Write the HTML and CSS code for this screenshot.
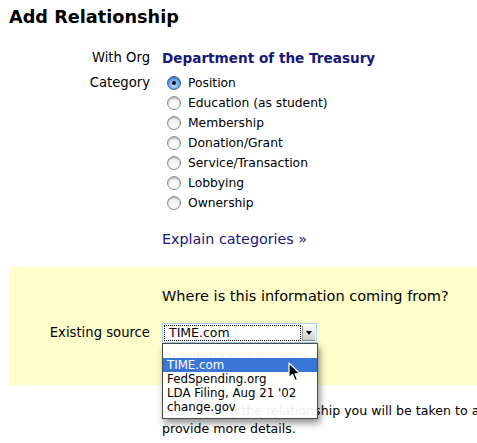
FILE: index.html
```html
<!DOCTYPE html>
<html>
<head>
<meta charset="utf-8">
<link rel="stylesheet" href="styles.css">
</head>
<body>
<h1 class="title">Add Relationship</h1>
<div class="form">
  <div class="row">
    <div class="label">With Org</div>
    <div class="org">Department of the Treasury</div>
  </div>
  <div class="row">
    <div class="label">Category</div>
    <div class="radios">
      <div class="opt"><span class="radio checked"></span>Position</div>
      <div class="opt"><span class="radio"></span>Education (as student)</div>
      <div class="opt"><span class="radio"></span>Membership</div>
      <div class="opt"><span class="radio"></span>Donation/Grant</div>
      <div class="opt"><span class="radio"></span>Service/Transaction</div>
      <div class="opt"><span class="radio"></span>Lobbying</div>
      <div class="opt"><span class="radio"></span>Ownership</div>
    </div>
  </div>
  <div class="row">
    <div class="label"></div>
    <a class="explain">Explain categories »</a>
  </div>
</div>
<div class="source">
  <div class="row">
    <div class="label"></div>
    <div class="question">Where is this information coming from?</div>
  </div>
  <div class="row srcrow">
    <div class="label">Existing source</div>
    <div class="selectwrap">
      <div class="select">
        <div class="selval">TIME.com</div>
        <div class="selbtn"><span class="tri"></span></div>
      </div>
      <div class="dropdown">
        <div class="item blank">&nbsp;</div>
        <div class="item hl">TIME.com</div>
        <div class="item">FedSpending.org</div>
        <div class="item">LDA Filing, Aug 21 '02</div>
        <div class="item">change.gov</div>
      </div>
      <svg class="cursor" width="14" height="22" viewBox="0 0 14 22"><path d="M1 1 L1 16 L4.5 12.5 L7 18.5 L9.5 17.5 L7 11.8 L12 11.8 Z" fill="#000" stroke="#fff" stroke-width="1.2" stroke-linejoin="round"/></svg>
    </div>
  </div>
  <div class="row">
    <div class="label"></div>
    <a class="newsrc">Or enter a new source »</a>
  </div>
</div>
<div class="row note">
  <div class="label"></div>
  <div class="notetext">After saving the relationship you will be taken to a<br>provide more details.</div>
</div>
</body>
</html>
```

FILE: styles.css
```css
html, body {
  overflow: hidden;
}
body {
  margin: 0;
  padding: 0 0 0 9px;
  font-family: "DejaVu Sans", "Verdana", sans-serif;
  color: #000;
  background: #fff;
  width: 468px;
}
.title {
  font-size: 17.7px;
  font-weight: bold;
  line-height: 22px;
  margin: 6px 0 0;
}
.form {
  margin-top: 20px;
}
.row {
  display: grid;
  grid-template-columns: 141px 1fr;
  column-gap: 12px;
  align-items: start;
}
.label {
  text-align: right;
  font-size: 13.2px;
  line-height: 20px;
  white-space: nowrap;
}
.org {
  font-size: 13.6px;
  font-weight: bold;
  color: #16167c;
  line-height: 20px;
  white-space: nowrap;
  margin-bottom: 5px;
}
.radios {
  display: flex;
  flex-direction: column;
}
.opt {
  display: flex;
  align-items: center;
  height: 20px;
  font-size: 12.3px;
  white-space: nowrap;
}
.radio {
  width: 12px;
  height: 12px;
  border-radius: 50%;
  border: 1px solid #8c8c8c;
  background: radial-gradient(circle at 50% 70%, #ffffff 0%, #f4f4f4 45%, #d2d2d2 100%);
  box-shadow: inset 0 1px 1px rgba(0,0,0,0.25);
  margin-left: 5px;
  margin-right: 7px;
  flex: none;
  position: relative;
}
.radio.checked {
  border-color: #3a5f9a;
  background: radial-gradient(circle at 50% 65%, #bfe0ff 0%, #7db5ef 40%, #3a7ad6 100%);
}
.radio.checked::after {
  content: "";
  position: absolute;
  left: 4px;
  top: 4px;
  width: 4px;
  height: 4px;
  border-radius: 50%;
  background: #111;
}
.explain {
  font-size: 14.3px;
  line-height: 20px;
  color: #16167c;
  margin-top: 16px;
  white-space: nowrap;
}
.source {
  background: #ffffcc;
  margin-top: 18px;
  padding: 19px 0 17px;
}
.question {
  font-size: 14.5px;
  line-height: 20px;
  white-space: nowrap;
}
.srcrow {
  margin-top: 17px;
}
.selectwrap {
  position: relative;
  width: 155px;
  height: 20px;
}
.select {
  box-sizing: border-box;
  width: 155px;
  height: 20px;
  border: 1px solid #9fd3f2;
  background: #fff;
  display: flex;
  align-items: stretch;
  padding: 1px;
}
.selval {
  flex: 1;
  border: 1px dotted #000;
  font-size: 12.5px;
  line-height: 14px;
  padding-left: 4px;
}
.selbtn {
  width: 12px;
  margin: 1px 0 0 1px;
  background: linear-gradient(#f6f6f6, #cfcfcf);
  border-left: 1px solid #999;
  border-bottom: 1px solid #888;
  display: flex;
  align-items: center;
  justify-content: center;
}
.tri {
  width: 0;
  height: 0;
  border-left: 3.5px solid transparent;
  border-right: 3.5px solid transparent;
  border-top: 4px solid #000;
}
.dropdown {
  position: absolute;
  left: 0;
  top: 20px;
  width: 156px;
  box-sizing: border-box;
  border: 1px solid #4a4a4a;
  background: rgba(255,255,255,0.93);
  box-shadow: 2px 4px 7px rgba(0,0,0,0.45);
  padding: 0 0 4px;
  z-index: 2;
}
.item {
  font-size: 11.8px;
  line-height: 14px;
  padding-left: 4px;
  white-space: nowrap;
}
.item.hl {
  background: #3a76d6;
  color: #fff;
}
.cursor {
  position: absolute;
  left: 126px;
  top: 39px;
  z-index: 3;
}
.newsrc {
  font-size: 12.3px;
  line-height: 20px;
  color: #16167c;
  margin-top: 5px;
  white-space: nowrap;
}
.note {
  margin-top: 17px;
}
.notetext {
  font-size: 12.6px;
  line-height: 18px;
  white-space: nowrap;
}
```
